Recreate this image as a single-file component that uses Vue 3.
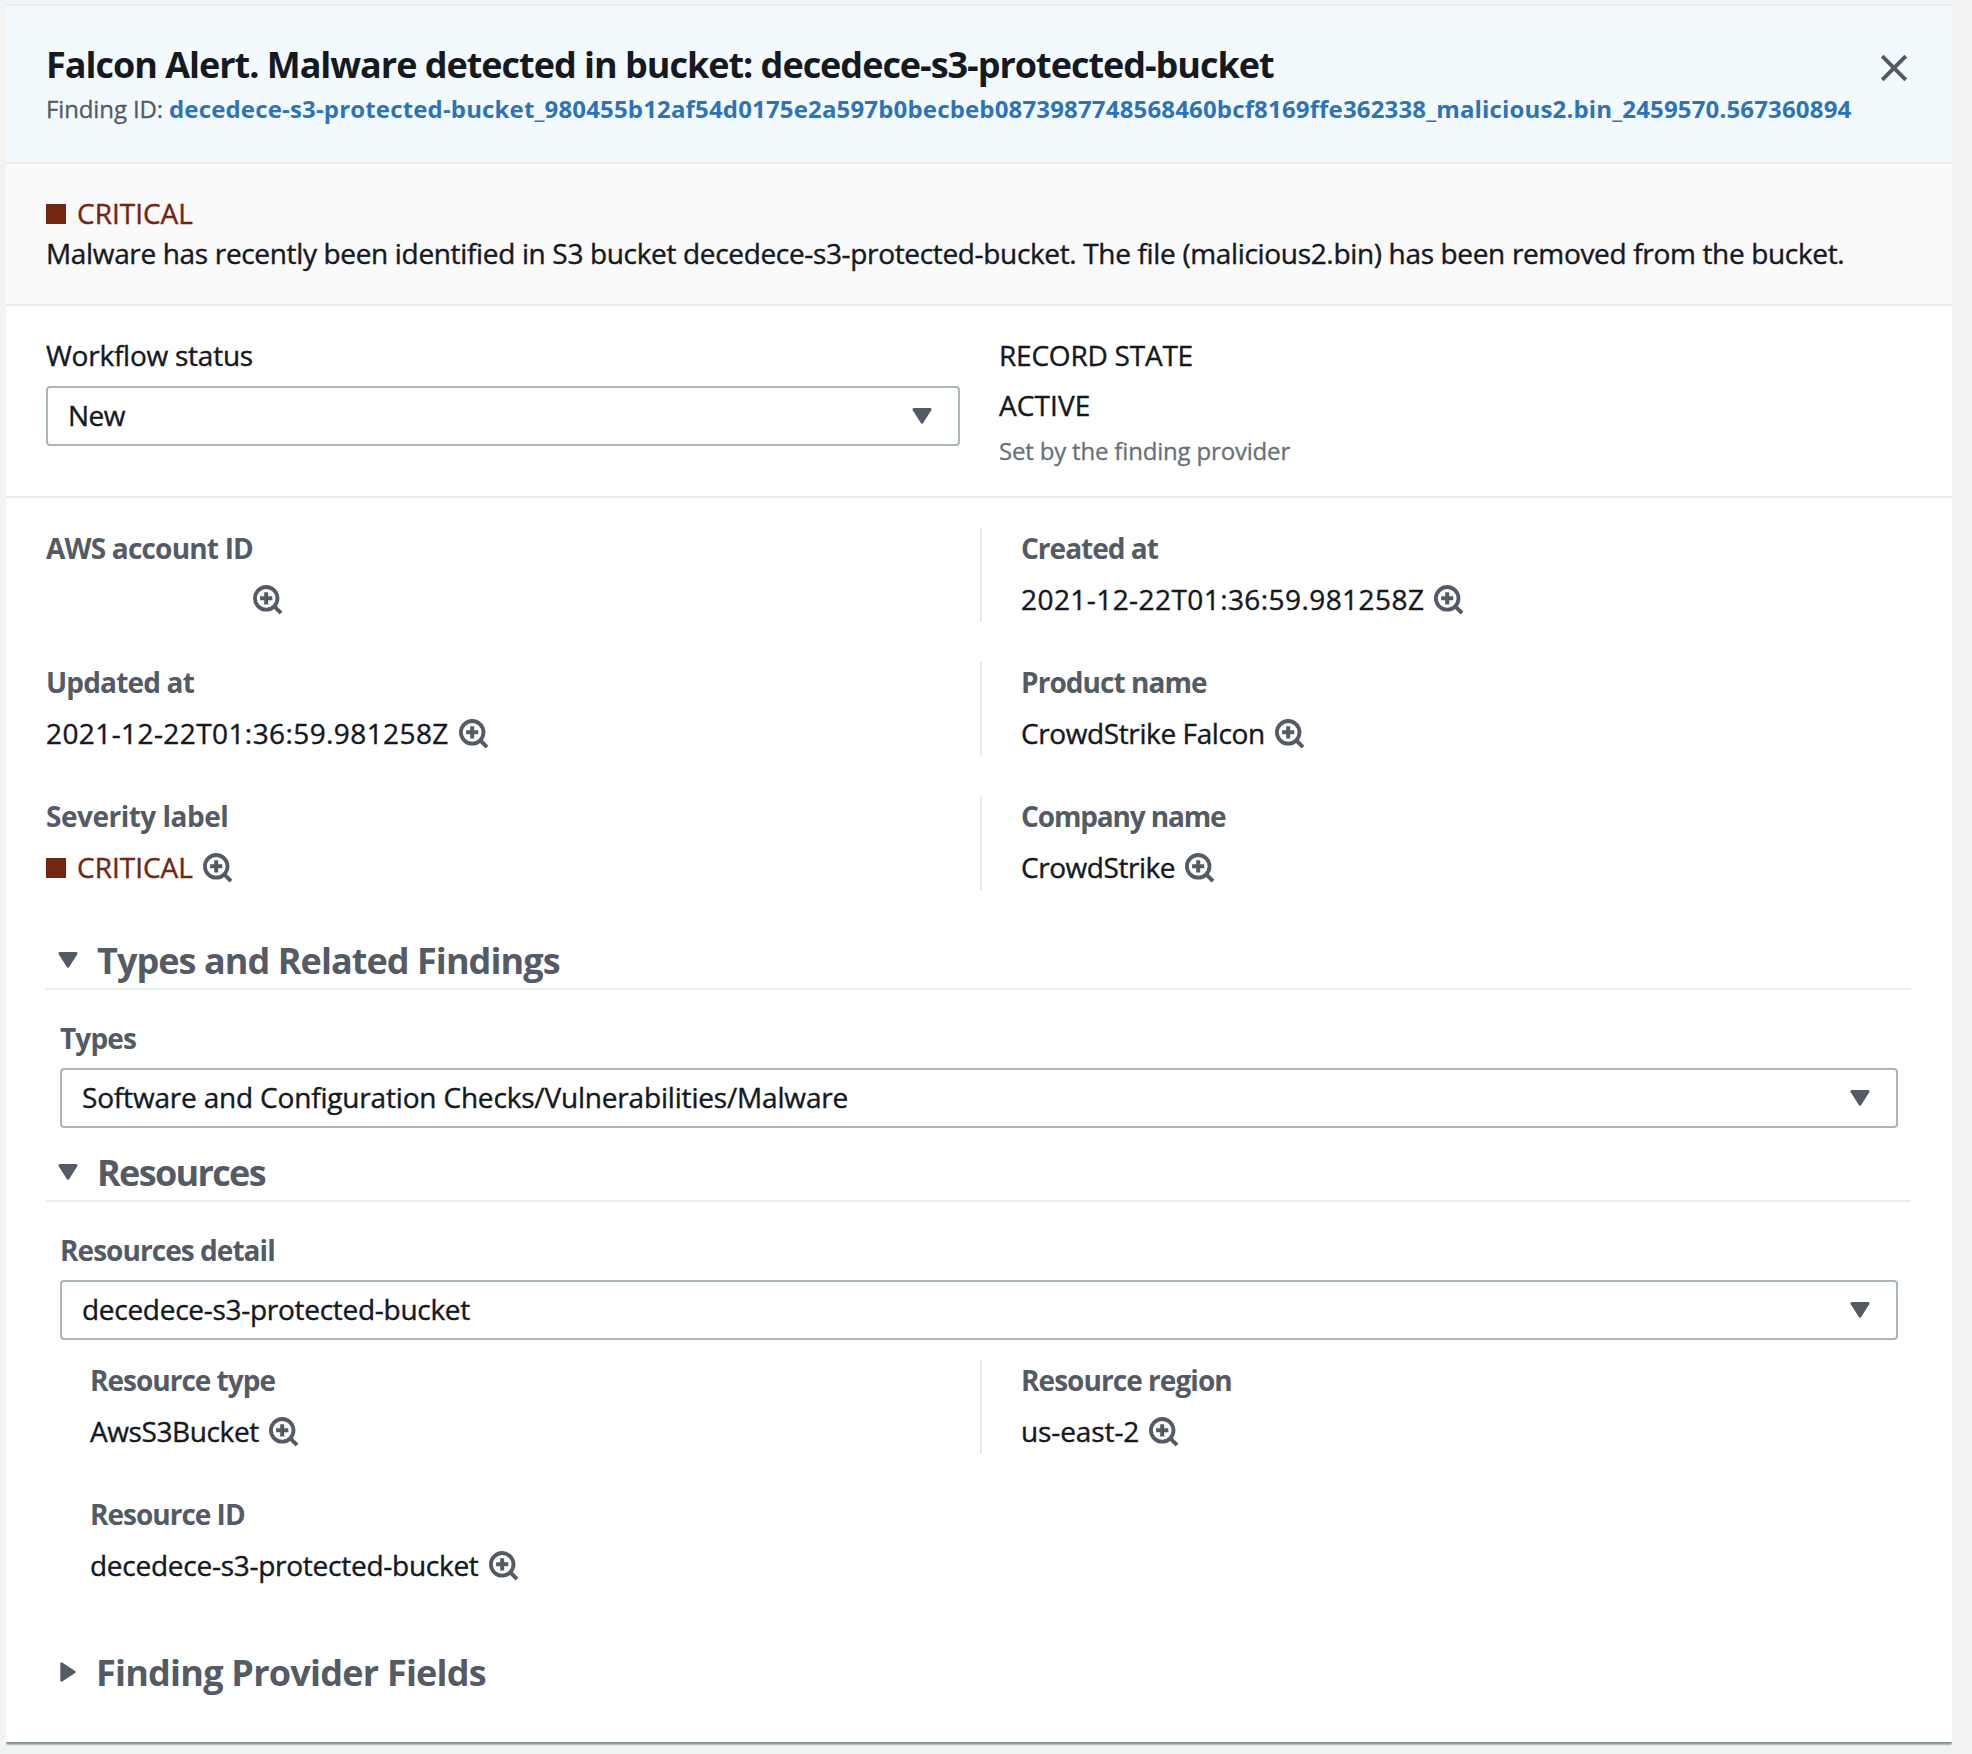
<script setup>
import { h } from 'vue'

const ZoomIcon = () =>
  h('svg', { class: 'zoom-icon', width: 30, height: 30, viewBox: '0 0 30 30', fill: 'none', stroke: '#545b64', 'stroke-width': 4 }, [
    h('circle', { cx: 13.2, cy: 13.3, r: 11.3, 'stroke-width': 3.8 }),
    h('path', { d: 'M13.2 7.2v12.2M7.1 13.3h12.2' }),
    h('path', { d: 'M21 21.1l7 7' }),
  ])

const Caret = () =>
  h('svg', { class: 'caret', width: 20, height: 16, viewBox: '0 0 20 16' }, [
    h('path', { d: 'M1.5 1.5h17L10 14.5z', fill: '#545b64', stroke: '#545b64', 'stroke-width': 3, 'stroke-linejoin': 'round', transform: 'translate(.5 .1) scale(.95 .97)' }),
  ])

// track / valueTrack: letter-spacing in px
const fields = [
  { label: 'AWS account ID', track: -0.81, redacted: true },
  { label: 'Created at', track: -0.98, value: '2021-12-22T01:36:59.981258Z', valueTrack: 0.43 },
  { label: 'Updated at', track: -0.83, value: '2021-12-22T01:36:59.981258Z', valueTrack: 0.41 },
  { label: 'Product name', track: -0.95, value: 'CrowdStrike Falcon', valueTrack: -0.39 },
  { label: 'Severity label', track: -0.5, value: 'CRITICAL', valueTrack: 0, critical: true },
  { label: 'Company name', track: -1.15, value: 'CrowdStrike', valueTrack: -0.45 },
]
const resource = [
  { label: 'Resource type', track: -1, value: 'AwsS3Bucket', valueTrack: -0.4 },
  { label: 'Resource region', track: -0.95, value: 'us-east-2', valueTrack: -0.1 },
  { label: 'Resource ID', track: -1, value: 'decedece-s3-protected-bucket', valueTrack: -0.26 },
]
const px = (n) => ({ letterSpacing: (n || 0) + 'px' })
</script>

<template>
  <div class="page">
    <section class="panel">
      <header class="head">
        <div>
          <h1 class="title">Falcon Alert. Malware detected in bucket: decedece-s3-protected-bucket</h1>
          <p class="finding">
            <span class="finding-key">Finding ID:</span>
            <a class="finding-link">decedece-s3-protected-bucket_980455b12af54d0175e2a597b0becbeb0873987748568460bcf8169ffe362338_malicious2.bin_2459570.567360894</a>
          </p>
        </div>
        <svg class="close" width="28" height="28" viewBox="0 0 28 28" stroke="#545b64" stroke-width="4" fill="none">
          <path d="M2.2 2.2l23.6 23.6M25.8 2.2L2.2 25.8" />
        </svg>
      </header>

      <div class="banner">
        <div class="line critical"><i class="square"></i>CRITICAL</div>
        <p class="line description">Malware has recently been identified in S3 bucket decedece-s3-protected-bucket. The file (malicious2.bin) has been removed from the bucket.</p>
      </div>

      <div class="status">
        <div class="workflow">
          <div class="line workflow-label">Workflow status</div>
          <div class="select"><span class="new">New</span><Caret /></div>
        </div>
        <div class="record">
          <div class="line record-label">RECORD STATE</div>
          <div class="line record-value">ACTIVE</div>
          <div class="hint">Set by the finding provider</div>
        </div>
      </div>

      <div class="grid summary">
        <div v-for="f in fields" :key="f.label" class="field">
          <div class="label" :style="px(f.track)">{{ f.label }}</div>
          <div class="line value" :class="{ critical: f.critical }">
            <i v-if="f.critical" class="square"></i>
            <span v-if="f.redacted" class="redacted"></span>
            <span v-else :style="px(f.valueTrack)">{{ f.value }}</span>
            <ZoomIcon />
          </div>
        </div>
      </div>

      <div class="section">
        <h2 class="heading types-heading"><Caret /><span>Types and Related Findings</span></h2>
        <div class="body">
          <div class="label types-label">Types</div>
          <div class="select"><span class="types-value">Software and Configuration Checks/Vulnerabilities/Malware</span><Caret /></div>
        </div>
      </div>

      <div class="section resources">
        <h2 class="heading resources-heading"><Caret /><span>Resources</span></h2>
        <div class="body">
          <div class="label detail-label">Resources detail</div>
          <div class="select"><span class="detail-value">decedece-s3-protected-bucket</span><Caret /></div>
        </div>
      </div>

      <div class="grid resource">
        <div v-for="f in resource" :key="f.label" class="field">
          <div class="label" :style="px(f.track)">{{ f.label }}</div>
          <div class="line value">
            <span :style="px(f.valueTrack)">{{ f.value }}</span>
            <ZoomIcon />
          </div>
        </div>
      </div>

      <h2 class="heading collapsed">
        <svg class="caret-right" width="16" height="20" viewBox="0 0 16 20">
          <path d="M1.5 1.5v17l13-8.5z" fill="#545b64" stroke="#545b64" stroke-width="2.4" stroke-linejoin="round" />
        </svg>
        <span>Finding Provider Fields</span>
      </h2>
    </section>
  </div>
</template>

<style>
body {
  margin: 0;
  background: #f2f3f3;
}
</style>

<style scoped>
.page {
  box-sizing: border-box;
  width: 1972px;
  height: 1754px;
  padding: 4px 20px 0 6px;
  overflow: hidden;
  background: #f2f3f3;
  color: #16191f;
  font-family: "Open Sans", "Noto Sans", sans-serif;
  font-size: 28px;
  line-height: 40px;
  white-space: nowrap;
}
h1, h2, p {
  margin: 0;
}
.panel {
  box-sizing: border-box;
  height: 1738px;
  border-top: 2px solid #eaeded;
  background: #fff;
  box-shadow: 0 2px 2px #879596, 0 3px 2px -1px #879596;
  clip-path: inset(0 0 -6px 0);
}
.head {
  box-sizing: border-box;
  display: flex;
  justify-content: space-between;
  height: 158px;
  padding: 37px 44px 0 40px;
  border-bottom: 2px solid #eaeded;
  background: #f2fafd;
}
.title {
  font-size: 36px;
  line-height: 44px;
  font-weight: 700;
  letter-spacing: -1.02px;
}
.finding {
  display: flex;
  margin-top: 4px;
  font-size: 24px;
  line-height: 36px;
}
.finding-key {
  width: 123px;
  color: #545b64;
  letter-spacing: -0.12px;
  -webkit-text-stroke: 0.3px currentColor;
}
.finding-link {
  color: #2e73b8;
  font-weight: 700;
  letter-spacing: 0.16px;
}
.close {
  flex: none;
  margin-top: 11px;
}
.banner {
  box-sizing: border-box;
  height: 142px;
  padding: 29px 40px 0;
  border-bottom: 2px solid #ebebeb;
  background: #fafafa;
}
.line {
  -webkit-text-stroke: 0.4px currentColor;
}
.critical {
  display: flex;
  color: #732710;
}
.square {
  width: 20px;
  height: 20px;
  margin: 11px 11px 0 0;
  background: #732710;
}
.description {
  letter-spacing: -0.34px;
}
.status {
  box-sizing: border-box;
  display: flex;
  gap: 39px;
  height: 192px;
  padding: 29px 40px 0;
  border-bottom: 2px solid #ebebeb;
}
.workflow {
  width: 914px;
}
.workflow-label {
  letter-spacing: -0.24px;
}
.select {
  box-sizing: border-box;
  display: flex;
  align-items: center;
  justify-content: space-between;
  height: 60px;
  margin-top: 11px;
  padding: 0 26px 2px 20px;
  border: 2px solid #aab7b8;
  border-radius: 4px;
  -webkit-text-stroke: 0.4px currentColor;
}
.select .caret {
  margin-top: 2px;
}
.new {
  letter-spacing: -0.5px;
}
.types-value {
  letter-spacing: -0.18px;
}
.detail-value {
  letter-spacing: -0.28px;
}
.record-label {
  letter-spacing: -0.22px;
}
.record-value {
  margin-top: 10px;
  letter-spacing: 0.1px;
}
.hint {
  margin-top: 8px;
  color: #687078;
  font-size: 24px;
  line-height: 36px;
  letter-spacing: -0.18px;
  -webkit-text-stroke: 0.3px currentColor;
}
.grid {
  display: grid;
  row-gap: 40px;
}
.summary {
  grid-template-columns: 934px 1fr;
  padding: 30px 40px 0;
}
.resource {
  grid-template-columns: 890px 1fr;
  padding: 20px 40px 0 84px;
}
.field {
  box-sizing: border-box;
  height: 94px;
}
.field:nth-child(even) {
  padding-left: 39px;
  border-left: 2px solid #ebebeb;
}
.label {
  color: #545b64;
  font-weight: 700;
}
.value {
  display: flex;
  margin-top: 11px;
}
.redacted {
  width: 197px;
}
.zoom-icon {
  flex: none;
  margin: 6px 0 0 10px;
}
.section {
  padding: 49px 41px 0 40px;
}
.resources {
  padding-top: 23px;
}
.heading {
  display: flex;
  color: #545b64;
  font-size: 36px;
  line-height: 44px;
  font-weight: 700;
}
.section .heading {
  padding: 0 0 5px 12px;
  border-bottom: 2px solid #eaeded;
}
.heading .caret {
  margin: 13px 19px 0 0;
}
.types-heading {
  letter-spacing: -0.94px;
}
.resources-heading {
  letter-spacing: -1.66px;
}
.body {
  padding: 28px 13px 0 14px;
}
.body .select {
  margin-top: 10px;
}
.types-label {
  letter-spacing: -0.86px;
}
.detail-label {
  letter-spacing: -0.95px;
}
.collapsed {
  padding: 63px 0 0 54px;
  letter-spacing: -0.77px;
}
.caret-right {
  margin: 11px 20px 0 0;
}
</style>
